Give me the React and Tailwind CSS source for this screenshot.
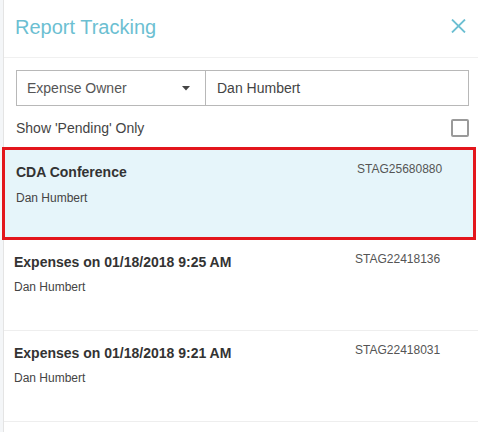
import React from "react";

const reports = [
  { id: "STAG25680880", title: "CDA Conference", owner: "Dan Humbert", selected: true },
  { id: "STAG22418136", title: "Expenses on 01/18/2018 9:25 AM", owner: "Dan Humbert" },
  { id: "STAG22418031", title: "Expenses on 01/18/2018 9:21 AM", owner: "Dan Humbert" },
];

const ReportRow = ({ report }) => {
  if (report.selected) {
    return (
      <div className="-ml-[2px] mr-[2px] h-[93px] border-[3px] border-[#e3161c] bg-[#e6f5fa] flex items-start pt-[11px] pl-[11px]">
        <div className="flex-1">
          <p className="text-[14px] leading-[22px] font-bold text-[#333]">{report.title}</p>
          <p className="mt-[7px] text-[12px] leading-[16px] text-[#444]">{report.owner}</p>
        </div>
        <div className="w-[116px] text-[12px] leading-[16px] text-[#555]">{report.id}</div>
      </div>
    );
  }

  return (
    <div className="h-[91px] border-b border-[#eeeeee] flex items-start pt-[11px] pl-[10px]">
      <div className="flex-1">
        <p className="text-[14px] leading-[22px] font-bold text-[#333]">{report.title}</p>
        <p className="mt-[6px] text-[12px] leading-[16px] text-[#444]">{report.owner}</p>
      </div>
      <div className="w-[123px] text-[12px] leading-[16px] text-[#555]">{report.id}</div>
    </div>
  );
};

const App = () => {
  return (
    <div
      className="flex w-[478px] h-[432px] overflow-hidden bg-white"
      style={{ fontFamily: '"Liberation Sans", Arial, sans-serif' }}
    >
      {/* page behind the panel */}
      <div className="w-[3px] bg-[#f4f6f8]"></div>

      <div className="flex-1 border-l border-[#e4e4e4] bg-white">
        {/* Header */}
        <div className="h-[58px] border-b border-[#f0f0f0] flex items-start justify-between pl-[11px] pr-[12px] pt-[13px]">
          <h1 className="text-[20px] leading-[28px] text-[#6cbfd2]">Report Tracking</h1>
          <button className="mt-[6px] text-[#6cbfd2]">
            <svg width="15" height="14" viewBox="0 0 15 14" fill="none" stroke="currentColor" strokeWidth="1.8">
              <path d="M1 0.5 L14 13.5 M14 0.5 L1 13.5" />
            </svg>
          </button>
        </div>

        <div className="pl-[12px] pr-[9px]">
          {/* Filter row */}
          <div className="mt-[12px] flex h-[36px]">
            <div className="w-[190px] border border-[#b8b8b8] flex items-center justify-between pl-[10px] pr-[15px]">
              <span className="text-[14px] leading-[20px] text-[#555]">Expense Owner</span>
              <svg width="8" height="5" viewBox="0 0 8 5">
                <path d="M0 0 H8 L4 4.5 Z" fill="#444" />
              </svg>
            </div>
            <div className="flex-1 border border-l-0 border-[#b8b8b8] flex items-center pl-[11px]">
              <span className="text-[14px] leading-[20px] text-[#444]">Dan Humbert</span>
            </div>
          </div>

          {/* Pending toggle */}
          <div className="mt-[12px] h-[20px] flex items-center justify-between">
            <span className="text-[14px] leading-[20px] text-[#444]">Show 'Pending' Only</span>
            <div className="w-[18px] h-[18px] border-2 border-[#9a9a9a] rounded-[2px]"></div>
          </div>
        </div>

        {/* Report list */}
        <div className="mt-[9px]">
          {reports.map((report) => (
            <ReportRow key={report.id} report={report} />
          ))}
        </div>
      </div>
    </div>
  );
};

export default App;
